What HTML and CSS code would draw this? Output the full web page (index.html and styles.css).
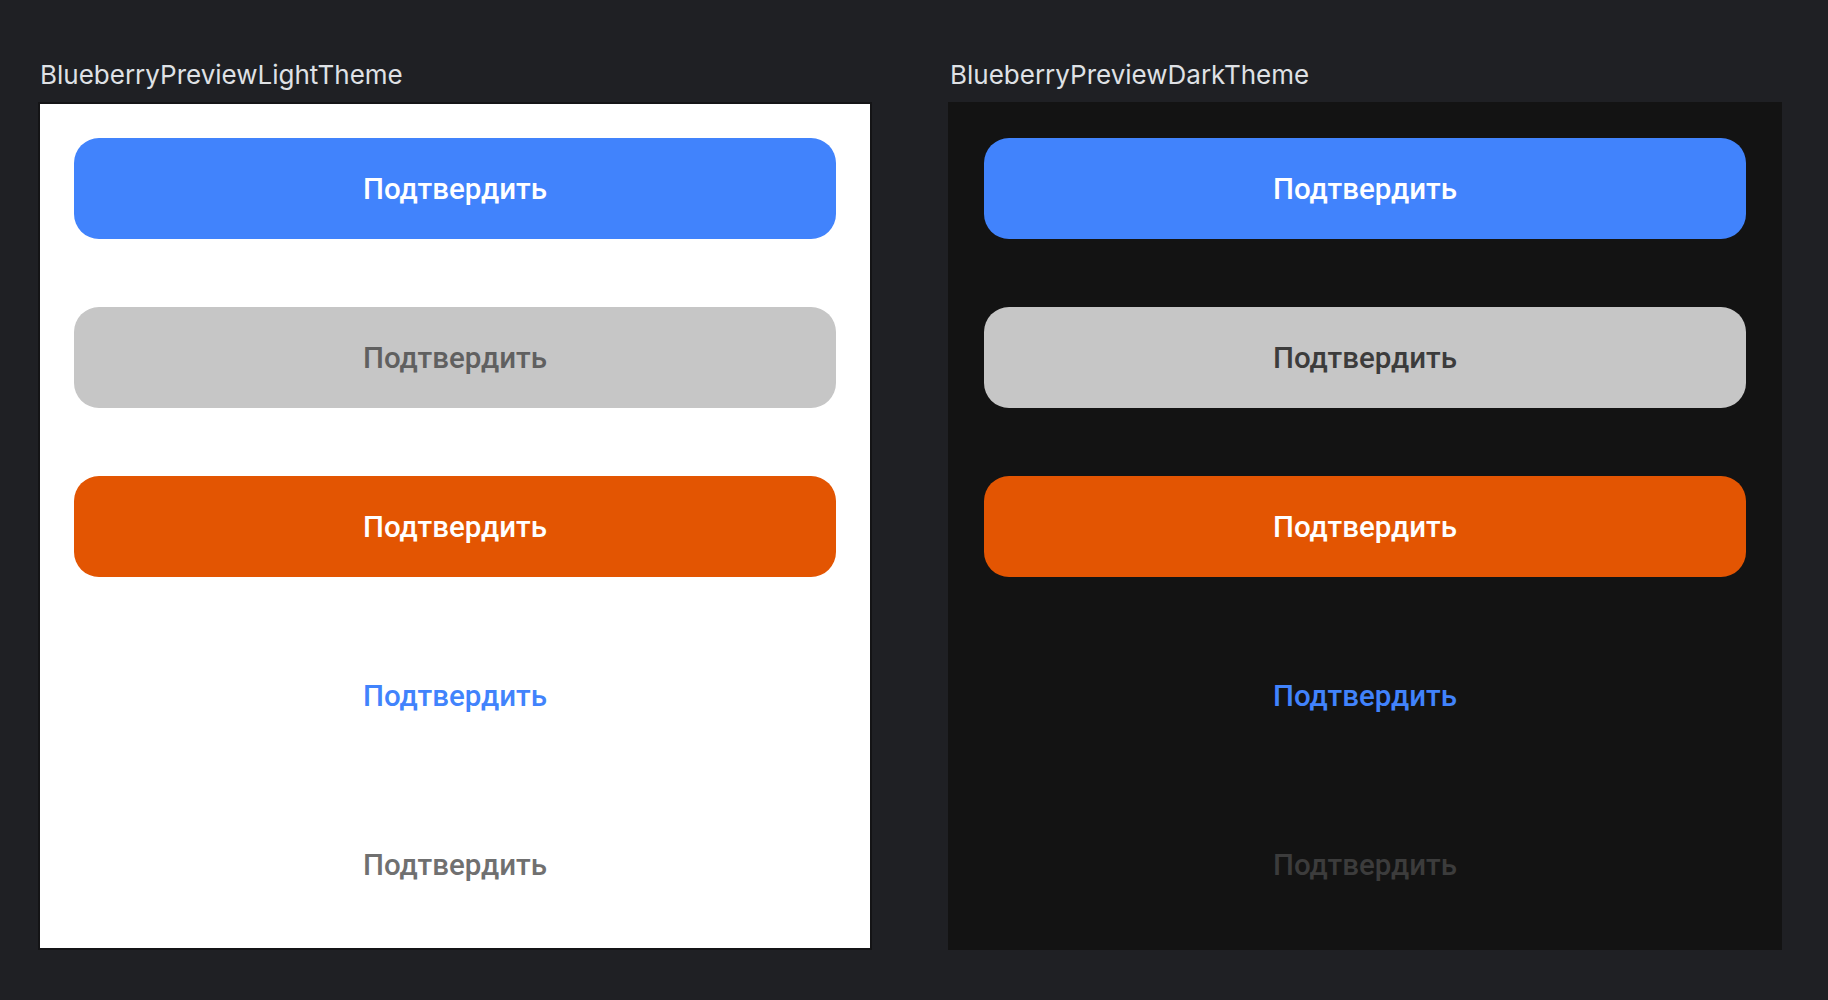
FILE: index.html
```html
<!DOCTYPE html>
<html lang="ru">
<head>
<meta charset="utf-8">
<title>Blueberry Preview</title>
<link rel="stylesheet" href="styles.css">
</head>
<body>
<main class="canvas">
  <section class="preview">
    <div class="preview-label">BlueberryPreviewLightTheme</div>
    <div class="panel panel-light">
      <div class="btn btn-primary">Подтвердить</div>
      <div class="btn btn-disabled-light">Подтвердить</div>
      <div class="btn btn-danger">Подтвердить</div>
      <div class="btn btn-text-blue">Подтвердить</div>
      <div class="btn btn-text-gray-light">Подтвердить</div>
    </div>
  </section>
  <section class="preview">
    <div class="preview-label">BlueberryPreviewDarkTheme</div>
    <div class="panel panel-dark">
      <div class="btn btn-primary">Подтвердить</div>
      <div class="btn btn-disabled-dark">Подтвердить</div>
      <div class="btn btn-danger">Подтвердить</div>
      <div class="btn btn-text-blue">Подтвердить</div>
      <div class="btn btn-text-gray-dark">Подтвердить</div>
    </div>
  </section>
</main>
</body>
</html>
```
FILE: styles.css
```css
html, body {
  margin: 0;
  padding: 0;
  background: #1f2024;
}

.canvas {
  display: flex;
  gap: 76px;
  padding: 60px 0 0 38px;
}

.preview {
  display: flex;
  flex-direction: column;
}

.preview-label {
  font-family: "Inter", "Noto Sans", sans-serif;
  font-size: 26px;
  line-height: 30px;
  color: #dfe1e5;
  padding-left: 2px;
  margin-bottom: 12px;
}

.panel {
  box-sizing: border-box;
  width: 834px;
  height: 848px;
  padding: 36px 36px 35px;
  display: flex;
  flex-direction: column;
  gap: 68px;
}

.panel-light {
  background: #ffffff;
  border: 2px solid #141416;
  padding: 34px 34px 33px;
}

.panel-dark {
  background: #131313;
}

.btn {
  height: 101px;
  border-radius: 25px;
  display: flex;
  align-items: center;
  justify-content: center;
  font-family: "Roboto", "Noto Sans", sans-serif;
  font-weight: 500;
  font-size: 29.5px;
  flex: none;
}

.btn-primary {
  background: #4183fc;
  color: #ffffff;
}

.btn-danger {
  background: #e35502;
  color: #ffffff;
}

.btn-disabled-light {
  background: #c6c6c6;
  color: #606060;
}

.btn-disabled-dark {
  background: #c6c6c6;
  color: #3c3c3c;
}

.btn-text-blue {
  color: #4183fc;
}

.btn-text-gray-light {
  color: #707070;
}

.btn-text-gray-dark {
  color: #3c3c3c;
}
```
